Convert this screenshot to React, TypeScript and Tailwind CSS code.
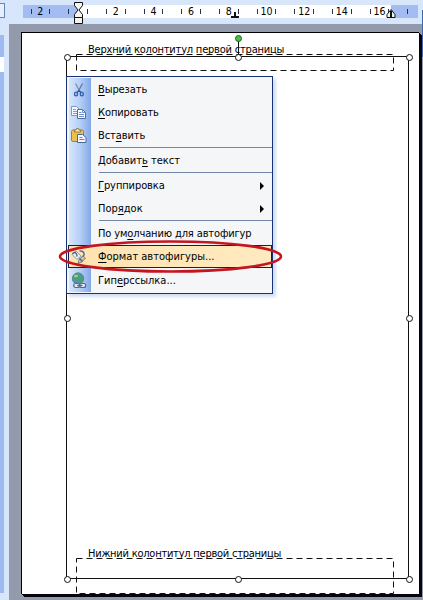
import type { ReactNode } from 'react';

type MenuRow =
  | { kind: 'separator' }
  | {
      kind: 'item';
      before?: string;
      hotkey: string;
      after: string;
      icon?: ReactNode;
      submenu?: boolean;
      active?: boolean;
      tracking?: string;
    };

function ScissorsIcon() {
  return (
    <svg width="16" height="16" viewBox="0 0 16 16" fill="none">
      <path d="M4.500 1.500 9 10" stroke="#8193b3" strokeWidth="1.400" />
      <path d="M11.500 1.500 7 10" stroke="#5f7aa6" strokeWidth="1.400" />
      <path d="M8 8.500 6 10.500M8 8.500l2 2" stroke="#2d5ea8" strokeWidth="1.500" />
      <ellipse cx="5" cy="12" rx="1.500" ry="1.900" stroke="#2d5ea8" strokeWidth="1.400" />
      <ellipse cx="10.800" cy="12" rx="1.500" ry="1.900" stroke="#2d5ea8" strokeWidth="1.400" />
    </svg>
  );
}

function CopyIcon() {
  return (
    <svg width="16" height="16" viewBox="0 0 16 16">
      <path d="M.5 1.500h5l3 3v6h-8z" fill="#f4f8ff" stroke="#7d9ac8" />
      <path d="M2 4.500h3M2 6.500h4M2 8.500h4" stroke="#7f9dd0" />
      <path d="M6.500 4.500h5l3 3v6h-8z" fill="#fafcff" stroke="#4c6ca6" />
      <path d="M11.500 4.500v3h3M8 7.500h2.500M8 9.500h5M8 11.500h5" fill="none" stroke="#6f90ca" />
    </svg>
  );
}

function PasteIcon() {
  return (
    <svg width="16" height="16" viewBox="0 0 16 16">
      <rect x=".5" y="2" width="12" height="11.500" rx="1.500" fill="#ecc04f" stroke="#a9802f" />
      <path d="M3.500 4V2H5l.5-1.500h2L8 2h1.500v2z" fill="#f3e8b8" stroke="#7f6b36" strokeWidth=".8" />
      <path d="M6.500 6.500h5l3.500 3v5H6.500z" fill="#f3f7ff" stroke="#4e6695" />
      <path d="M8.500 9.500h3M8.500 11.500h5" stroke="#6685ba" />
    </svg>
  );
}

function FormatShapeIcon() {
  return (
    <svg width="16" height="16" viewBox="0 0 16 16">
      <path d="M1 5.500 5 2l5 5-4 3.500z" fill="#e4ecf8" stroke="#8f9dba" />
      <path d="M1.500 5C3 2.500 6 3 6 7.500" fill="none" stroke="#43618f" strokeWidth="1.300" />
      <path d="M8.500 2c3-.5 5 1.500 4.500 4L10 10" fill="none" stroke="#53709d" strokeWidth="1.500" />
      <path d="m8 10.500 4-3.500 2.500 2L11 13l-4 1.500z" fill="#d6c48e" stroke="#746b62" strokeWidth=".8" />
      <path d="m8.500 9.500 3 3" stroke="#4467a6" strokeWidth="1.500" />
    </svg>
  );
}

function HyperlinkIcon() {
  return (
    <svg width="16" height="18" viewBox="0 0 16 18">
      <circle cx="7" cy="6.500" r="5.700" fill="#4f93b8" stroke="#4a7b91" strokeWidth=".8" />
      <path d="M3 3c2-2 4-2 5-1L7 4l2 2-3 3-3-2-1 1C1 6 1.500 4 3 3zM10 4l2 1-.5 4L9 10 8 8z" fill="#4fa260" />
      <ellipse cx="5" cy="4" rx="2" ry="1.300" fill="#b7e1cd" opacity=".7" />
      <rect x="2.700" y="11.500" width="6" height="4" rx="2" fill="#e5ecf5" stroke="#536983" strokeWidth="1.200" />
      <rect x="8.700" y="11.500" width="6" height="4" rx="2" fill="#e5ecf5" stroke="#536983" strokeWidth="1.200" />
      <path d="M6 13.500h5.500" stroke="#536983" strokeWidth="1.200" />
    </svg>
  );
}

const MENU: MenuRow[] = [
  { kind: 'item', hotkey: 'В', after: 'ырезать', icon: <ScissorsIcon />, tracking: 'tracking-[-0.1px]' },
  { kind: 'item', hotkey: 'К', after: 'опировать', icon: <CopyIcon />, tracking: 'tracking-[-0.1px]' },
  { kind: 'item', before: 'Вст', hotkey: 'а', after: 'вить', icon: <PasteIcon />, tracking: 'tracking-[-0.1px]' },
  { kind: 'separator' },
  { kind: 'item', before: 'Добавит', hotkey: 'ь', after: ' текст' },
  { kind: 'separator' },
  { kind: 'item', hotkey: 'Г', after: 'руппировка', submenu: true, tracking: 'tracking-[-0.1px]' },
  { kind: 'item', before: 'Пор', hotkey: 'я', after: 'док', submenu: true },
  { kind: 'separator' },
  { kind: 'item', before: 'По ум', hotkey: 'о', after: 'лчанию для автофигур', tracking: 'tracking-[-0.13px]' },
  { kind: 'item', hotkey: 'Ф', after: 'ормат автофигуры...', icon: <FormatShapeIcon />, active: true },
  { kind: 'item', before: 'Гип', hotkey: 'е', after: 'рссылка...', icon: <HyperlinkIcon /> },
];

const RULER = ['2', '', '2', '4', '6', '8', '10', '12', '14', '16', ''];

// Selection handles, in canvas coordinates
const HANDLES = [
  [67, 57], [238, 57], [409, 57],
  [67, 318], [409, 318],
  [67, 579], [238, 579], [409, 579],
];

function Ruler() {
  return (
    <div className="relative h-6 pt-[5px] pl-[23px]">
      <div className="flex h-[13px] w-[395px] overflow-hidden bg-[linear-gradient(to_right,#a3bdf3_55px,#fff_55px,#fff_368px,#a3bdf3_368px)]">
        <div className="-ml-[1.5px] flex shrink-0">
          {RULER.map((n, i) => (
            <div key={i} className="flex w-[37.7px] shrink-0 items-center justify-between px-[9px] text-[10.5px] leading-[13px]">
              <i className="h-[5px] w-px bg-[#26334d]" />
              <span className="flex w-0 justify-center">{n}</span>
              <i className="h-[5px] w-px bg-[#26334d]" />
            </div>
          ))}
        </div>
      </div>
      <svg className="absolute top-[1px] left-[73px]" width="11" height="24" fill="#f4f4ee" stroke="#111">
        <path d="M1.500 1.500h8v3l-3.500 4.500 3.500 4.500v3h-8v-3L5 9 1.500 4.500z" />
        <path d="M1.500 16.500h8v6h-8z" />
      </svg>
      <svg className="absolute top-[11px] left-[230px]" width="10" height="8" stroke="#111">
        <path d="M1 6h8M5 1v5" strokeWidth="2" />
      </svg>
      <svg className="absolute top-[8px] left-[385px]" width="12" height="11" fill="#f4f4ee" stroke="#111">
        <path d="m6 1.500 4 5v3H2v-3z" />
        <path d="M6 3v6" strokeWidth="2" />
      </svg>
    </div>
  );
}

function ContextMenu() {
  return (
    <div className="absolute top-[76px] left-[66px] h-[218px] w-[207px] border border-[#173277] bg-[#f5f6f8] py-px shadow-[3px_3px_3px_#d3def3]">
      <div className="h-full bg-[linear-gradient(to_right,#f5f6f8_2px,#d7e6fc_2px,#b5cff6_13px,#83a8e7_24px,transparent_24px)]">
        {MENU.map((row, i) =>
          row.kind === 'separator' ? (
            <div key={i} className="ml-8 h-[2px] border-t border-[#7386a5]" />
          ) : (
            <div
              key={i}
              className={`flex h-[23px] items-center pl-1 ${
                row.active
                  ? 'mb-[1.5px] ml-px bg-[linear-gradient(to_right,#ffe3b0,#ffeac0)] pl-[3px] outline outline-1 -outline-offset-1 outline-[#1b1b50]'
                  : ''
              }`}
            >
              <div className="flex w-[27px] shrink-0">{row.icon}</div>
              <span className={`pt-px text-[11px] whitespace-pre ${row.tracking ?? ''}`}>
                {row.before}
                <span className="underline decoration-1 underline-offset-2">{row.hotkey}</span>
                {row.after}
              </span>
              {row.submenu && (
                <i className="mr-2 ml-auto border-y-4 border-l-4 border-y-transparent border-l-black" />
              )}
            </div>
          ),
        )}
      </div>
    </div>
  );
}

export default function App() {
  return (
    <div className="relative flex h-[600px] w-[423px] flex-col overflow-hidden bg-[#d8e6fb] font-['DejaVu_Sans_Condensed','DejaVu_Sans',sans-serif] text-black [font-stretch:condensed]">
      <Ruler />
      <div className="flex min-h-0 flex-1">
        <div className="flex w-[9px] shrink-0 flex-col pt-[11px] pr-[5px]">
          <div className="h-[22px] bg-[#9fb9f1]" />
          <div className="h-[15px] bg-white" />
          <div className="h-[521px] bg-[#9fb9f1]" />
        </div>
        <div className="flex-1 bg-[#929aac] pt-2 pl-[12px]">
          <div className="flex h-[562px] w-[398px] flex-col justify-between border border-r-0 border-b-0 border-black bg-white pl-[54px] shadow-[1px_1px_0_#05050d,2px_2px_0_#05050d,3px_3px_0_#05050d]">
            <div className="pt-[9px]">
              <p className="h-[12px] pl-[12px] text-[11px] leading-[15px] tracking-[-0.2px] whitespace-nowrap">
                Верхний колонтитул первой страницы
              </p>
              <svg width="318" height="17" fill="none" stroke="#111" strokeDasharray="6 4">
                <rect x=".5" y=".5" width="317" height="16" />
              </svg>
            </div>
            <div>
              <p className="h-[12px] pl-[12px] text-[11px] leading-[15px] tracking-[-0.23px] whitespace-nowrap">
                Нижний колонтитул первой страницы
              </p>
              <svg className="block" width="318" height="36" fill="none" stroke="#111" strokeDasharray="6 4">
                <rect x=".5" y=".5" width="317" height="35" />
              </svg>
            </div>
          </div>
        </div>
      </div>
      <div className="absolute top-0 left-0 h-6 w-[5px]">
        <div className="mt-[3px] h-[15px] border border-l-0 border-[#6585b5] bg-[#e7f0ff]" />
      </div>
      <div className="absolute top-[10px] right-0 h-[47px] w-px bg-[#3e67b4]" />
      <svg className="absolute inset-0" width="423" height="600" fill="none" stroke="#111">
        <rect x="66.500" y="56.500" width="342" height="522" />
        <path d="M238.500 41v13" />
        <circle cx="238.500" cy="38.500" r="3" fill="#4bc044" stroke="#225f28" />
        {HANDLES.map(([x, y]) => (
          <circle key={`${x}-${y}`} cx={x + 0.5} cy={y + 0.5} r="3" fill="#fff" />
        ))}
      </svg>
      <ContextMenu />
      <svg className="absolute top-[238px] left-[57px]" width="228" height="38" fill="none">
        <ellipse cx="113.500" cy="18.500" rx="110.500" ry="15" stroke="#c4161f" strokeWidth="2.600" />
      </svg>
    </div>
  );
}
